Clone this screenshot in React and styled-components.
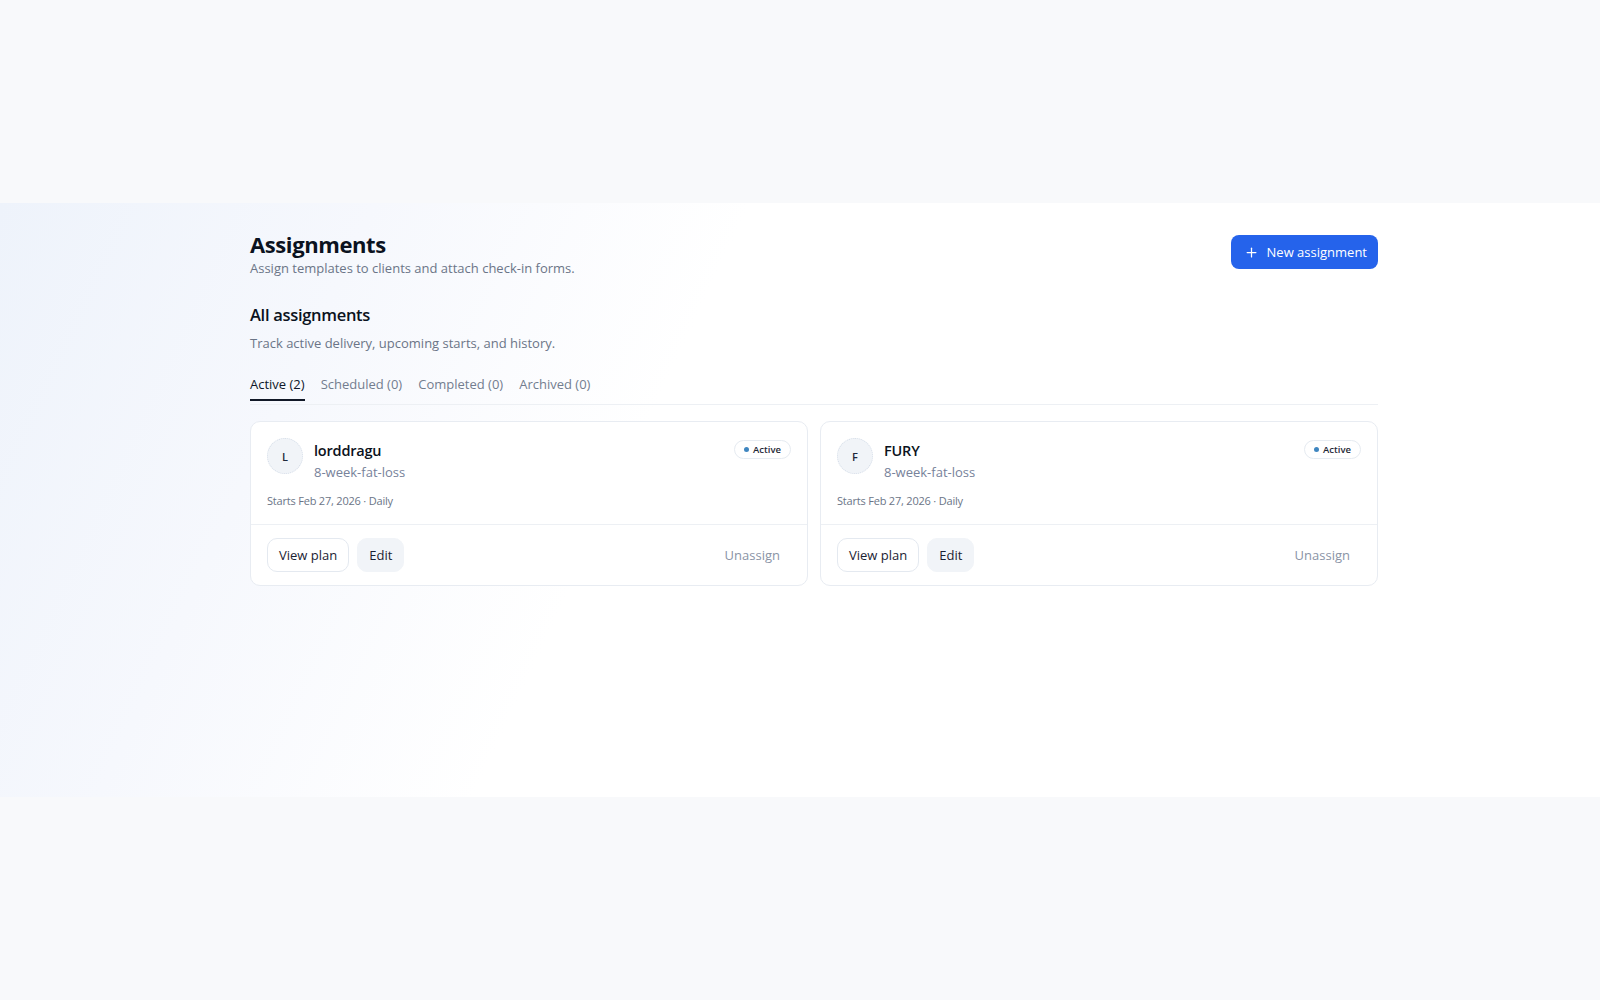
import React, { useState } from "react";
import styled, { createGlobalStyle } from "styled-components";
import { Plus } from "lucide-react";

const GlobalStyle = createGlobalStyle`
  * { box-sizing: border-box; }
  html, body {
    margin: 0;
    padding: 0;
    background: #f8f9fb;
    font-family: "Open Sans", "Noto Sans", "Liberation Sans", sans-serif;
    color: #0f172a;
  }
`;

const Page = styled.div`
  min-height: 1000px;
  padding-top: 203px;
`;

const Panel = styled.main`
  height: 594px;
  padding-top: 28px;
  background: linear-gradient(115deg, #eef3fb 0%, #f6f8fd 20%, #ffffff 40%);
`;

const Content = styled.div`
  width: 1128px;
  margin-left: 250px;
`;

const Header = styled.header`
  display: flex;
  justify-content: space-between;
  align-items: flex-start;
`;

const Title = styled.h1`
  margin: 0;
  font-size: 22px;
  line-height: 26px;
  font-weight: 700;
  letter-spacing: -0.4px;
  color: #0b1220;
`;

const Subtitle = styled.p`
  margin: 2px 0 0;
  font-size: 13px;
  line-height: 18px;
  color: #6b7587;
`;

const PrimaryButton = styled.button`
  display: flex;
  align-items: center;
  gap: 8px;
  height: 34px;
  margin-top: 4px;
  padding: 0 11px 0 13px;
  border: none;
  border-radius: 8px;
  background: #2563eb;
  color: #ffffff;
  font-family: inherit;
  font-size: 13px;
  cursor: pointer;
`;

const Section = styled.section`
  margin-top: 27px;
`;

const SectionTitle = styled.h2`
  margin: 0;
  font-size: 16.5px;
  line-height: 22px;
  font-weight: 600;
  letter-spacing: -0.3px;
  color: #0b1220;
`;

const SectionText = styled.p`
  margin: 8px 0 0;
  font-size: 13px;
  line-height: 18px;
  color: #6b7587;
`;

const Tabs = styled.nav`
  display: flex;
  gap: 16px;
  margin-top: 23px;
  border-bottom: 1px solid #edf0f4;
`;

const Tab = styled.button`
  padding: 0 0 6px;
  border: none;
  background: none;
  font-family: inherit;
  font-size: 13px;
  line-height: 18px;
  color: ${(p) => (p.$active ? "#0f172a" : "#737d8f")};
  border-bottom: 2px solid ${(p) => (p.$active ? "#111827" : "transparent")};
  margin-bottom: 3px;
  cursor: pointer;
`;

const Grid = styled.div`
  display: grid;
  grid-template-columns: 1fr 1fr;
  gap: 12px;
  margin-top: 16px;
`;

const Card = styled.article`
  background: #ffffff;
  border: 1px solid #e8ecf2;
  border-radius: 10px;
`;

const CardBody = styled.div`
  padding: 16px 16px 15px;
  border-bottom: 1px solid #edf0f4;
`;

const CardTop = styled.div`
  display: flex;
  align-items: flex-start;
  justify-content: space-between;
`;

const Client = styled.div`
  display: flex;
  align-items: flex-start;
  gap: 11px;
`;

const Avatar = styled.div`
  width: 36px;
  height: 36px;
  border-radius: 50%;
  background: #f1f4f8;
  border: 1px dotted #d6dee9;
  display: flex;
  align-items: center;
  justify-content: center;
  font-size: 11px;
  font-weight: 600;
  color: #1e293b;
`;

const ClientName = styled.div`
  margin-top: 3px;
  font-size: 14.5px;
  line-height: 20px;
  font-weight: 600;
  letter-spacing: -0.2px;
  color: #0b1220;
`;

const PlanName = styled.div`
  margin-top: 2px;
  font-size: 13px;
  line-height: 18px;
  color: #77829a;
`;

const Badge = styled.span`
  display: inline-flex;
  align-items: center;
  gap: 4px;
  height: 19px;
  margin-top: 2px;
  padding: 0 9px 0 9px;
  border: 1px solid #e6ebf1;
  border-radius: 999px;
  font-size: 9.5px;
  font-weight: 600;
  color: #1f2937;
`;

const Dot = styled.span`
  width: 5px;
  height: 5px;
  border-radius: 50%;
  background: #3f86c0;
`;

const Meta = styled.div`
  margin-top: 12px;
  font-size: 11px;
  line-height: 16px;
  letter-spacing: -0.2px;
  color: #6b7587;
`;

const CardFooter = styled.div`
  display: flex;
  align-items: center;
  gap: 8px;
  padding: 13px 16px 13px;
`;

const Button = styled.button`
  height: 34px;
  padding: 0 11px;
  border-radius: 10px;
  border: 1px solid ${(p) => (p.$variant === "soft" ? "#f1f4f8" : "#e4e9f0")};
  background: ${(p) => (p.$variant === "soft" ? "#f1f4f8" : "#ffffff")};
  font-family: inherit;
  font-size: 13px;
  color: #1a2233;
  cursor: pointer;
`;

const GhostButton = styled.button`
  margin-left: auto;
  height: 34px;
  padding: 0 11px;
  border: none;
  background: none;
  font-family: inherit;
  font-size: 13px;
  color: #8a94a6;
  cursor: pointer;
`;

const tabs = [
  { key: "active", label: "Active (2)" },
  { key: "scheduled", label: "Scheduled (0)" },
  { key: "completed", label: "Completed (0)" },
  { key: "archived", label: "Archived (0)" },
];

const assignments = [
  { id: 1, client: "lorddragu", plan: "8-week-fat-loss", starts: "Feb 27, 2026", cadence: "Daily" },
  { id: 2, client: "FURY", plan: "8-week-fat-loss", starts: "Feb 27, 2026", cadence: "Daily" },
];

const AssignmentCard = ({ item }) => (
  <Card>
    <CardBody>
      <CardTop>
        <Client>
          <Avatar>{item.client[0].toUpperCase()}</Avatar>
          <div>
            <ClientName>{item.client}</ClientName>
            <PlanName>{item.plan}</PlanName>
          </div>
        </Client>
        <Badge>
          <Dot />
          Active
        </Badge>
      </CardTop>
      <Meta>
        Starts {item.starts} · {item.cadence}
      </Meta>
    </CardBody>
    <CardFooter>
      <Button>View plan</Button>
      <Button $variant="soft">Edit</Button>
      <GhostButton>Unassign</GhostButton>
    </CardFooter>
  </Card>
);

const App = () => {
  const [activeTab, setActiveTab] = useState("active");

  return (
    <>
      <GlobalStyle />
      <Page>
        <Panel>
          <Content>
            <Header>
              <div>
                <Title>Assignments</Title>
                <Subtitle>Assign templates to clients and attach check-in forms.</Subtitle>
              </div>
              <PrimaryButton>
                <Plus size={15} strokeWidth={2} />
                New assignment
              </PrimaryButton>
            </Header>

            <Section>
              <SectionTitle>All assignments</SectionTitle>
              <SectionText>Track active delivery, upcoming starts, and history.</SectionText>
              <Tabs>
                {tabs.map((t) => (
                  <Tab key={t.key} $active={activeTab === t.key} onClick={() => setActiveTab(t.key)}>
                    {t.label}
                  </Tab>
                ))}
              </Tabs>
              <Grid>
                {assignments.map((a) => (
                  <AssignmentCard key={a.id} item={a} />
                ))}
              </Grid>
            </Section>
          </Content>
        </Panel>
      </Page>
    </>
  );
};

export default App;
